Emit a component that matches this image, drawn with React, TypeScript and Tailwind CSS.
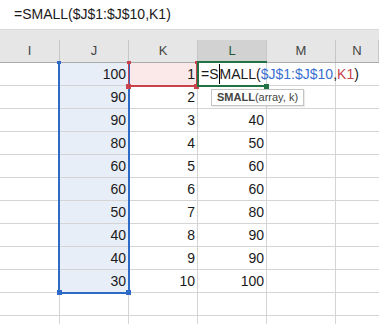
import React from 'react';

const cols = [
  { key: 'I', w: 'w-[60px]' },
  { key: 'J', w: 'w-[69px]' },
  { key: 'K', w: 'w-[69px]' },
  { key: 'L', w: 'w-[69px]' },
  { key: 'M', w: 'w-[69px]' },
  { key: 'N', w: 'flex-1' },
];

const jVals = [100, 90, 90, 80, 60, 60, 50, 40, 40, 30];
// L2 sits under the function tooltip, so it is left blank here
const lVals = [null, null, 40, 50, 60, 60, 80, 90, 90, 100];

const App: React.FC = () => {
  const rows = Array.from({ length: 12 }, (_, i) => i);

  return (
    <div className="relative w-[379px] h-[324px] overflow-hidden bg-white font-['Liberation_Sans',Arial,sans-serif] text-[#1a1a1a]">
      {/* Formula bar */}
      <div className="h-[30px] flex items-center pl-[14px] text-[14px] border-b border-[#d9d9d9] bg-white">
        =SMALL($J$1:$J$10,K1)
      </div>
      <div className="h-[10px] bg-[#e6e6e6]" />

      {/* Column headers */}
      <div className="h-[23px] flex bg-[#e6e6e6] border-b border-[#ababab] text-[13px] text-[#444]">
        {cols.map((c) => (
          <div
            key={c.key}
            className={`${c.w} flex items-center justify-center border-r border-[#c6c6c6] ${
              c.key === 'L' ? 'bg-[#d2d2d2] text-[#245a3c]' : ''
            }`}
          >
            {c.key}
          </div>
        ))}
      </div>

      {/* Grid */}
      {rows.map((r) => (
        <div key={r} className="h-[23px] flex border-b border-[#d4d4d4] text-[14px]">
          <div className="w-[60px] border-r border-[#d4d4d4]" />
          <div
            className={`w-[69px] border-r border-[#d4d4d4] flex items-center justify-end pr-[2px] ${
              r < 10 ? 'bg-[#e8eef8]' : ''
            }`}
          >
            {r < 10 ? jVals[r] : ''}
          </div>
          <div
            className={`w-[69px] border-r border-[#d4d4d4] flex items-center justify-end pr-[2px] ${
              r === 0 ? 'bg-[#fbe8e9]' : ''
            }`}
          >
            {r < 10 ? r + 1 : ''}
          </div>
          <div className="w-[69px] border-r border-[#d4d4d4] flex items-center justify-end pr-[2px]">
            {r < 10 && lVals[r] !== null ? lVals[r] : ''}
          </div>
          <div className="w-[69px] border-r border-[#d4d4d4]" />
          <div className="flex-1" />
        </div>
      ))}

      {/* J1:J10 range highlight */}
      <div className="absolute left-[58px] top-[63px] w-[72px] h-[231px] border-x-2 border-b-2 border-[#2f6bc6]" />
      <div className="absolute left-[57px] top-[61px] w-[4px] h-[3px] bg-[#2f6bc6]" />
      <div className="absolute left-[57px] top-[290px] w-[5px] h-[5px] bg-[#2f6bc6]" />
      <div className="absolute left-[126px] top-[290px] w-[5px] h-[5px] bg-[#2f6bc6]" />

      {/* K1 reference highlight */}
      <div className="absolute left-[128px] top-[63px] w-[70px] h-[24px] border-l border-r-2 border-b-2 border-[#c8434c]" />
      <div className="absolute left-[127px] top-[61px] w-[4px] h-[3px] bg-[#c8434c]" />
      <div className="absolute left-[195px] top-[61px] w-[4px] h-[3px] bg-[#c8434c]" />
      <div className="absolute left-[126px] top-[84px] w-[5px] h-[5px] bg-[#c8434c]" />
      <div className="absolute left-[194px] top-[84px] w-[5px] h-[5px] bg-[#c8434c]" />

      {/* L1 active cell in edit mode */}
      <div className="absolute left-[197px] top-[61px] w-[70px] h-[26px] border-l-2 border-t-2 border-b-2 border-[#217346]" />
      <div className="absolute left-[264px] top-[84px] w-[5px] h-[5px] bg-[#217346]" />
      <div className="absolute left-[201px] top-[63px] h-[22px] flex items-center text-[14px] whitespace-nowrap">
        <span>=S</span>
        <span className="inline-block w-px h-[20px] bg-black" />
        <span>MALL(</span>
        <span className="text-[#3b6fd1]">$J$1:$J$10</span>
        <span>,</span>
        <span className="text-[#c8434c]">K1</span>
        <span>)</span>
      </div>

      {/* Function tooltip */}
      <div className="absolute left-[211px] top-[89px] h-[17px] px-[5px] flex items-center bg-white border border-[#c4c4c4] shadow-[1px_1px_1px_rgba(0,0,0,0.08)] text-[11px] text-[#444] whitespace-nowrap">
        <span className="font-bold">SMALL</span>
        <span>(array, k)</span>
      </div>
    </div>
  );
};

export default App;
